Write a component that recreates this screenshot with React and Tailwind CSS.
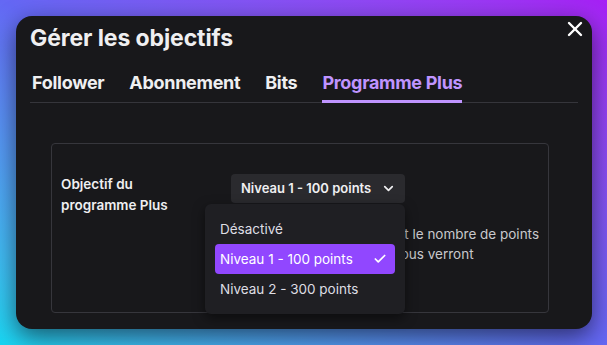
import { X, ChevronDown, Check } from "lucide-react";

const tabs = [
  { label: "Follower" },
  { label: "Abonnement" },
  { label: "Bits" },
  { label: "Programme Plus", active: true },
];

const options = [
  { label: "Désactivé" },
  { label: "Niveau 1 - 100 points", selected: true },
  { label: "Niveau 2 - 300 points" },
];

export default function App() {
  return (
    <div
      className="w-[607px] h-[345px] overflow-hidden bg-gradient-to-tr from-[#14d6f2] via-[#6468f4] to-[#a61ff5] pt-[16px] pl-[16px]"
      style={{ fontFamily: "Inter, 'Noto Sans', sans-serif" }}
    >
      <div className="relative w-[576px] h-[313px] bg-[#18181b] rounded-[16px] px-[14px] pt-[8px] shadow-[0_8px_24px_rgba(0,0,0,0.55)]">
        <button className="absolute top-[1px] right-[5px] text-white">
          <X size={24} strokeWidth={2.4} />
        </button>

        {/* Header */}
        <h1 className="text-[23px] leading-[28px] font-bold text-[#efeff1] tracking-[-0.1px]">
          Gérer les objectifs
        </h1>

        {/* Tabs */}
        <div className="mt-[19px] flex gap-[25px] border-b border-[#35353b] pl-[2px]">
          {tabs.map((t) => (
            <div
              key={t.label}
              className={`-mb-px pb-[5px] border-b-[3px] text-[18px] leading-[24px] font-bold tracking-[-0.3px] ${
                t.active ? "border-[#bf94ff] text-[#bf94ff]" : "border-transparent text-[#efeff1]"
              }`}
            >
              {t.label}
            </div>
          ))}
        </div>

        {/* Settings box */}
        <div className="mt-[40px] ml-[21px] w-[498px] h-[170px] border border-[#36363c] rounded-[4px] pl-[9px] pt-[30px] flex">
          <div className="w-[170px] text-[13.5px] leading-[21px] font-semibold text-[#efeff1]">
            Objectif du
            <br />
            programme Plus
          </div>
          <div className="flex flex-col items-start">
            <div className="relative w-[174px]">
              <button className="w-[174px] h-[29px] bg-[#2a2a2e] rounded-[4px] pl-[10px] pr-[9px] flex items-center justify-between text-[13px] font-semibold text-[#efeff1]">
                <span>Niveau 1 - 100 points</span>
                <ChevronDown size={15} strokeWidth={2.75} />
              </button>

              {/* Dropdown */}
              <div className="absolute z-10 right-0 top-full mt-px w-[200px] bg-[#1f1f23] rounded-[6px] pt-[10px] pb-[10px] px-[10px] shadow-[0_4px_12px_rgba(0,0,0,0.5)]">
                {options.map((o) => (
                  <div
                    key={o.label}
                    className={`h-[30px] pl-[5px] pr-[8px] flex items-center justify-between rounded-[4px] text-[13.5px] ${
                      o.selected ? "bg-[#9147ff] text-white" : "text-[#dedee3]"
                    }`}
                  >
                    <span>{o.label}</span>
                    {o.selected && <Check size={14} strokeWidth={3} />}
                  </div>
                ))}
              </div>
            </div>
            <p className="mt-[21px] ml-[2px] w-[315px] text-[13.5px] leading-[20px] text-[#c8c8cc] whitespace-nowrap">
              Choisissez l'objectif actif et le nombre de points
              <br />
              que tous les spectateurs vous verront
            </p>
          </div>
        </div>
      </div>
    </div>
  );
}
